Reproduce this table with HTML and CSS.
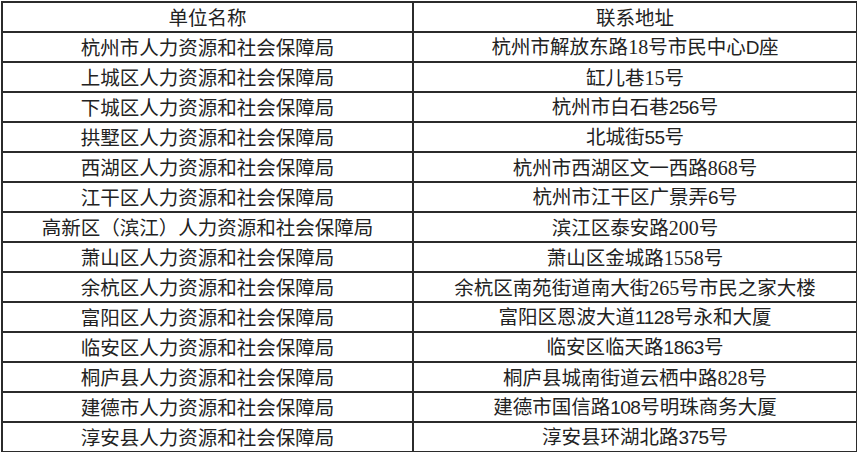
FILE: index.html
```html
<!DOCTYPE html>
<html lang="zh-CN">
<head>
<meta charset="utf-8">
<title>人力资源和社会保障局</title>
<link rel="stylesheet" href="styles.css">
</head>
<body>
<table class="grid">
  <colgroup><col class="c1"><col class="c2"></colgroup>
  <tr><td>单位名称</td><td>联系地址</td></tr>
  <tr><td>杭州市人力资源和社会保障局</td><td>杭州市解放东路<span class="s">18</span>号市民中心<span class="a">D</span>座</td></tr>
  <tr><td>上城区人力资源和社会保障局</td><td>缸儿巷<span class="s">15</span>号</td></tr>
  <tr><td>下城区人力资源和社会保障局</td><td>杭州市白石巷<span class="a">256</span>号</td></tr>
  <tr><td>拱墅区人力资源和社会保障局</td><td>北城街<span class="a">55</span>号</td></tr>
  <tr><td>西湖区人力资源和社会保障局</td><td>杭州市西湖区文一西路<span class="s">868</span>号</td></tr>
  <tr><td>江干区人力资源和社会保障局</td><td>杭州市江干区广景弄<span class="a">6</span>号</td></tr>
  <tr><td>高新区（滨江）人力资源和社会保障局</td><td>滨江区泰安路<span class="s">200</span>号</td></tr>
  <tr><td>萧山区人力资源和社会保障局</td><td>萧山区金城路<span class="s">1558</span>号</td></tr>
  <tr><td>余杭区人力资源和社会保障局</td><td>余杭区南苑街道南大街<span class="s">265</span>号市民之家大楼</td></tr>
  <tr><td>富阳区人力资源和社会保障局</td><td>富阳区恩波大道<span class="a">1128</span>号永和大厦</td></tr>
  <tr><td>临安区人力资源和社会保障局</td><td>临安区临天路<span class="a">1863</span>号</td></tr>
  <tr><td>桐庐县人力资源和社会保障局</td><td>桐庐县城南街道云栖中路<span class="s">828</span>号</td></tr>
  <tr><td>建德市人力资源和社会保障局</td><td>建德市国信路<span class="a">108</span>号明珠商务大厦</td></tr>
  <tr><td>淳安县人力资源和社会保障局</td><td>淳安县环湖北路<span class="a">375</span>号</td></tr>
</table>
</body>
</html>
```
FILE: styles.css
```css
html, body {
  margin: 0;
  padding: 0;
  background: #ffffff;
}
body {
  padding: 1px 0 0 1px;
  font-family: "Noto Sans CJK SC", "Liberation Serif", serif;
  color: #222222;
}
.grid {
  border-collapse: collapse;
  table-layout: fixed;
  width: 855px;
}
.grid .c1 { width: 411px; }
.grid .c2 { width: 444px; }
.grid tr { height: 30px; }
.grid td {
  border: 2px solid #2b2b2b;
  height: 28px;
  padding: 0;
  text-align: center;
  vertical-align: middle;
  font-size: 19.5px;
  line-height: 20px;
  white-space: nowrap;
  overflow: hidden;
}
.s {
  font-family: "Liberation Serif", serif;
  font-size: 20px;
  line-height: 20px;
}
.a {
  font-family: "Liberation Sans", sans-serif;
  font-size: 19px;
  line-height: 20px;
  letter-spacing: -0.5px;
}
```
